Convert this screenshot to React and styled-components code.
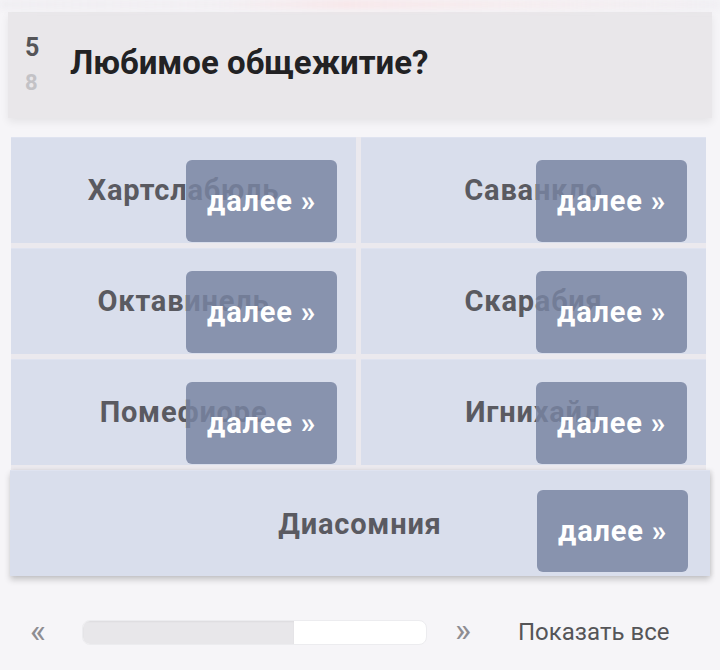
import React from 'react';
import styled, { createGlobalStyle } from 'styled-components';

const houses = [
  'Хартслабюль',
  'Саванкло',
  'Октавинель',
  'Скарабия',
  'Помефиоре',
  'Игнихайд',
];

const GlobalStyle = createGlobalStyle`
  html, body {
    margin: 0;
    padding: 0;
    background: #f6f5f8;
  }
  body {
    font-family: Roboto, "Noto Sans", "DejaVu Sans", sans-serif;
  }
`;

const Page = styled.div`
  width: 720px;
  height: 670px;
  overflow: hidden;
  background: #f6f5f8;
  padding-top: 12px;
  box-sizing: border-box;
  position: relative;
`;

/* хвост предыдущей карточки, ушедшей за верх экрана */
const TopFade = styled.div`
  position: absolute;
  top: 0;
  left: 0;
  right: 0;
  height: 9px;
  background: linear-gradient(
    90deg,
    rgba(235, 233, 238, 0.6) 0%,
    rgba(240, 236, 240, 0.7) 30%,
    rgba(248, 226, 228, 0.8) 48%,
    rgba(246, 232, 234, 0.7) 70%,
    rgba(235, 233, 238, 0.5) 100%
  );
  filter: blur(3px);
`;

const Header = styled.div`
  margin: 0 8px;
  height: 106px;
  background: #e9e7ea;
  box-shadow: 0 4px 8px rgba(0, 0, 0, 0.07);
  display: flex;
  align-items: center;
  box-sizing: border-box;
  padding-left: 17px;
`;

const Counter = styled.div`
  width: 45px;
  display: flex;
  flex-direction: column;
  align-items: flex-start;
  padding-left: 0;
  font-weight: 700;
  line-height: 1;
`;

const Current = styled.span`
  font-size: 25px;
  color: #555558;
  margin-bottom: 12px;
  margin-top: -2px;
`;

const Total = styled.span`
  font-size: 22px;
  color: #c3c2c6;
`;

const Title = styled.h1`
  margin: -6px 0 0 0;
  font-size: 33px;
  font-weight: 700;
  color: #222224;
`;

const Grid = styled.div`
  margin: 19px 14px 0 11px;
  display: grid;
  grid-template-columns: 1fr 1fr;
  grid-auto-rows: 106px;
  gap: 5px;
  background: #ebe9ee;
`;

const Cell = styled.div`
  position: relative;
  background: #d9deec;
  border-top: 1px solid #dfe3f0;
  box-sizing: border-box;
  display: flex;
  align-items: center;
  justify-content: center;
  grid-column: ${(p) => (p.$wide ? '1 / span 2' : 'auto')};
  margin: ${(p) => (p.$wide ? '0 -4px 0 -1px' : '0')};
  box-shadow: ${(p) =>
    p.$wide ? '0 4px 6px rgba(0, 0, 0, 0.18), 2px 0 4px rgba(0, 0, 0, 0.08)' : 'none'};
`;

const Label = styled.span`
  font-size: 29px;
  letter-spacing: 0.8px;
  font-weight: 700;
  color: #5a5a61;
  margin-top: ${(p) => (p.$wide ? '0' : '-2px')};
`;

const Next = styled.button`
  position: absolute;
  top: ${(p) => (p.$wide ? '19px' : '22px')};
  right: ${(p) => (p.$wide ? '22px' : '19px')};
  width: 151px;
  height: 82px;
  border: none;
  border-radius: 6px;
  background: rgba(120, 132, 162, 0.84);
  color: #ffffff;
  font-family: Roboto, "Noto Sans", sans-serif;
  font-size: 29px;
  letter-spacing: 0.8px;
  font-weight: 700;
  padding: 0;
  cursor: pointer;
`;

const Pager = styled.div`
  margin-top: 41px;
  display: flex;
  align-items: center;
  padding-left: 30px;
`;

const Arrow = styled.span`
  font-size: 34px;
  color: #8e8d92;
  width: ${(p) => p.$w}px;
  line-height: 1;
  margin-top: -4px;
`;

const Track = styled.div`
  width: 345px;
  height: 25px;
  border-radius: 8px;
  background: #ffffff;
  border: 1px solid #ececef;
  box-sizing: border-box;
  overflow: hidden;
  margin-right: 28px;
`;

const Fill = styled.div`
  height: 100%;
  background: #e8e7ea;
  box-shadow: inset 0 1px 2px rgba(0, 0, 0, 0.05);
`;

const ShowAll = styled.a`
  font-size: 24px;
  color: #555558;
  text-decoration: none;
`;

export default function App() {
  const progress = 212 / 345;
  return (
    <>
      <GlobalStyle />
      <Page>
        <TopFade />
        <Header>
          <Counter>
            <Current>5</Current>
            <Total>8</Total>
          </Counter>
          <Title>Любимое общежитие?</Title>
        </Header>
        <Grid>
          {houses.map((name) => (
            <Cell key={name}>
              <Label>{name}</Label>
              <Next>далее »</Next>
            </Cell>
          ))}
          <Cell $wide>
            <Label $wide>Диасомния</Label>
            <Next $wide>далее »</Next>
          </Cell>
        </Grid>
        <Pager>
          <Arrow $w={52}>«</Arrow>
          <Track>
            <Fill style={{ width: `${progress * 100}%` }} />
          </Track>
          <Arrow $w={63}>»</Arrow>
          <ShowAll href="#">Показать все</ShowAll>
        </Pager>
      </Page>
    </>
  );
}
